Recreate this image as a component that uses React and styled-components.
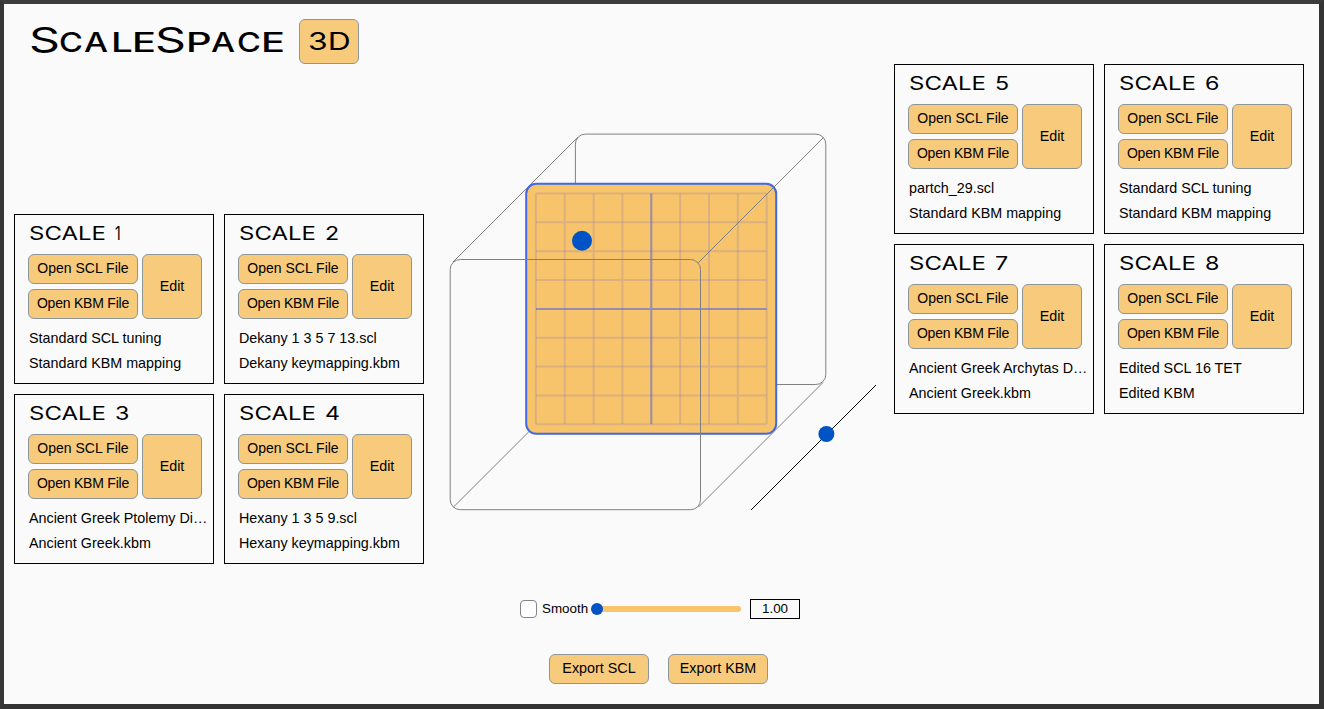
import React from 'react';
import styled, { createGlobalStyle } from 'styled-components';

const GlobalStyle = createGlobalStyle`
  * { box-sizing: border-box; }
  body {
    margin: 0;
    font-family: "Liberation Sans", Arial, sans-serif;
    font-size: 14.33px;
    color: #000;
    overflow: hidden;
  }
`;

const Window = styled.div`
  width: 1324px;
  height: 709px;
  border-style: solid;
  border-width: 4px 5px 5px 4px;
  border-color: #3c3c3c #343434 #323232 #383634;
  background: #fafafa;
  display: flex;
  flex-direction: column;
`;

const Header = styled.header`
  height: 60px;
  flex: none;
  display: flex;
  align-items: flex-start;
  padding: 15px 0 0 25px;
`;

const Logo = styled.h1`
  margin: 0;
  width: 270px;
  height: 45px;
  display: flex;
  align-items: baseline;
  font: 500 26.5px/41px Inter, sans-serif;
  white-space: nowrap;
`;

const LogoLetter = styled.span`
  width: ${(p) => p.$width}px;
  font-size: ${(p) => (p.$large ? 34.5 : 26.5)}px;
  font-weight: ${(p) => (p.$large ? 400 : 500)};
  transform: scaleX(${(p) => p.$stretch});
  transform-origin: left;
`;

const Button = styled.button`
  width: ${(p) => p.$width}px;
  height: ${(p) => p.$height || 30}px;
  padding: ${(p) => (p.$height ? '0' : '0 0 2px')};
  border: 1px solid #8c979b;
  border-radius: 6px;
  background: #f7ca7c;
  color: #000;
  font: ${(p) => p.$size || 14.33}px "Liberation Sans", Arial, sans-serif;
  line-height: 1;
  letter-spacing: ${(p) => p.$tracking || 0}px;
  white-space: nowrap;
`;

const ModeLabel = styled.span`
  display: inline-block;
  font: 400 24.5px/1 Inter, sans-serif;
  transform: scaleX(1.3);
`;

const Main = styled.main`
  display: grid;
  grid-template-columns: 410px 470px 410px;
  padding-left: 10px;
  align-items: start;
`;

const ScaleGrid = styled.section`
  display: grid;
  grid-template-columns: 200px 200px;
  gap: 10px;
  margin-top: ${(p) => p.$offset}px;
`;

const Card = styled.article`
  height: 170px;
  border: 1px solid #000;
  padding: 4px 4px 0 13px;
`;

const CardTitle = styled.h2`
  margin: 0 0 5px 1px;
  height: 30px;
  font: 400 18.6px/29px Inter, sans-serif;
  white-space: pre;
  display: flex;
`;

const TitleWord = styled.span`
  width: 86px;
  transform: scaleX(1.29);
  transform-origin: left;
`;

const TitleNumber = styled.span`
  transform: scaleX(${(p) => (p.$narrow ? 0.75 : 1.25)});
  transform-origin: left;
`;

const CardActions = styled.div`
  display: flex;
  gap: 4px;
  margin-bottom: 7px;
`;

const FileButtons = styled.div`
  display: flex;
  flex-direction: column;
  gap: 5px;
`;

const FileName = styled.div`
  margin-left: 1px;
  height: 25px;
  line-height: 25px;
  white-space: nowrap;
`;

const Center = styled.section`
  display: flex;
  flex-direction: column;
  padding-top: 60px;
`;

const Space = styled.svg`
  display: block;
  margin-left: 16px;
  flex: none;
`;

const Controls = styled.div`
  display: flex;
  align-items: center;
  height: 20px;
  margin: 75px 0 0 95.5px;
  font-size: 13.4px;
`;

const Checkbox = styled.span`
  width: 17.5px;
  height: 17.5px;
  border: 1px solid #858585;
  border-radius: 4px;
  background: #fff;
`;

const ControlLabel = styled.label`
  width: 49px;
  margin-left: 5px;
  padding-bottom: 2px;
`;

const Slider = styled.div`
  width: 150px;
  height: 12px;
  display: flex;
  align-items: center;
`;

const Thumb = styled.span`
  width: 12px;
  height: 12px;
  border-radius: 50%;
  background: #0053c4;
  z-index: 1;
`;

const Track = styled.span`
  width: 144px;
  height: 6px;
  margin-left: -6px;
  border-radius: 0 3px 3px 0;
  background: #f9c46b;
`;

const ValueBox = styled.div`
  width: 50px;
  height: 20px;
  margin-left: 9px;
  border: 1px solid #000;
  line-height: 18px;
  text-align: center;
`;

const ExportRow = styled.div`
  display: flex;
  gap: 19px;
  margin: 35px 0 0 125px;
`;

const leftScales = [
  ['1', 'Standard SCL tuning', 'Standard KBM mapping'],
  ['2', 'Dekany 1 3 5 7 13.scl', 'Dekany keymapping.kbm'],
  ['3', 'Ancient Greek Ptolemy Di…', 'Ancient Greek.kbm'],
  ['4', 'Hexany 1 3 5 9.scl', 'Hexany keymapping.kbm'],
];

const rightScales = [
  ['5', 'partch_29.scl', 'Standard KBM mapping'],
  ['6', 'Standard SCL tuning', 'Standard KBM mapping'],
  ['7', 'Ancient Greek Archytas D…', 'Ancient Greek.kbm'],
  ['8', 'Edited SCL 16 TET', 'Edited KBM'],
];

// letter, advance, horizontal stretch
const logoLetters = [
  ['S', 30, 1.4], ['C', 25, 1.23], ['A', 26.5, 1.28], ['L', 21.5, 1.46], ['E', 22.5, 1.5],
  ['S', 31, 1.4], ['P', 25, 1.51], ['A', 26, 1.28], ['C', 24.5, 1.23], ['E', 22, 1.5],
];

function ScalePanel({ scales, offset }) {
  return (
    <ScaleGrid $offset={offset}>
      {scales.map(([id, scl, kbm]) => (
        <Card key={id}>
          <CardTitle>
            <TitleWord>SCALE</TitleWord>
            <TitleNumber $narrow={id === '1'}>{id}</TitleNumber>
          </CardTitle>
          <CardActions>
            <FileButtons>
              <Button $width={110} $size={14}>Open SCL File</Button>
              <Button $width={110} $size={14} $tracking={-0.22}>Open KBM File</Button>
            </FileButtons>
            <Button $width={60} $height={65}>Edit</Button>
          </CardActions>
          <FileName>{scl}</FileName>
          <FileName>{kbm}</FileName>
        </Card>
      ))}
    </ScaleGrid>
  );
}

function CubeView() {
  const steps = [0, 1, 2, 3, 5, 6, 7, 8];
  return (
    <Space width="450" height="400" viewBox="440 124 450 400" fill="none">
      <g stroke="#808080" strokeWidth="1">
        <rect x="575.4" y="134.1" width="250.4" height="250.4" rx="10" />
        <path d="M453 262 578 137M453.3 507.2 578 382.5" />
      </g>
      <rect x="526.2" y="183.8" width="250" height="250" rx="10" fill="#f7c46c" stroke="#4169e1" strokeWidth="2" />
      <g stroke="#806fb0" strokeOpacity="0.23" strokeWidth="2">
        {steps.map((i) => (
          <path key={i} d={`M${535.9 + i * 28.85} 193.5v230.8M535.9 ${193.5 + i * 28.85}h230.8`} />
        ))}
      </g>
      <path d="M651.3 193.5v230.8M535.9 308.9h230.8" stroke="#4a60e1" strokeOpacity="0.55" strokeWidth="2" />
      <g stroke="#808080" strokeWidth="1">
        <rect x="450.2" y="259.5" width="250.3" height="250.2" rx="10" />
        <path d="M698.3 262.7 823.5 137.5M698.5 507 823 382.5" />
      </g>
      <path d="M751 510 876 385" stroke="#000" />
      <circle cx="582" cy="240.8" r="10" fill="#0053c4" />
      <circle cx="826.4" cy="434" r="8" fill="#0053c4" />
    </Space>
  );
}

export default function App() {
  return (
    <>
      <GlobalStyle />
      <Window>
        <Header>
          <Logo>
            {logoLetters.map(([letter, width, stretch], i) => (
              <LogoLetter key={i} $width={width} $stretch={stretch} $large={letter === 'S'}>
                {letter}
              </LogoLetter>
            ))}
          </Logo>
          <Button $width={60} $height={45}>
            <ModeLabel>3D</ModeLabel>
          </Button>
        </Header>
        <Main>
          <ScalePanel scales={leftScales} offset={150} />
          <Center>
            <CubeView />
            <Controls>
              <Checkbox />
              <ControlLabel>Smooth</ControlLabel>
              <Slider>
                <Thumb />
                <Track />
              </Slider>
              <ValueBox>1.00</ValueBox>
            </Controls>
            <ExportRow>
              <Button $width={100}>Export SCL</Button>
              <Button $width={100}>Export KBM</Button>
            </ExportRow>
          </Center>
          <ScalePanel scales={rightScales} offset={0} />
        </Main>
      </Window>
    </>
  );
}
